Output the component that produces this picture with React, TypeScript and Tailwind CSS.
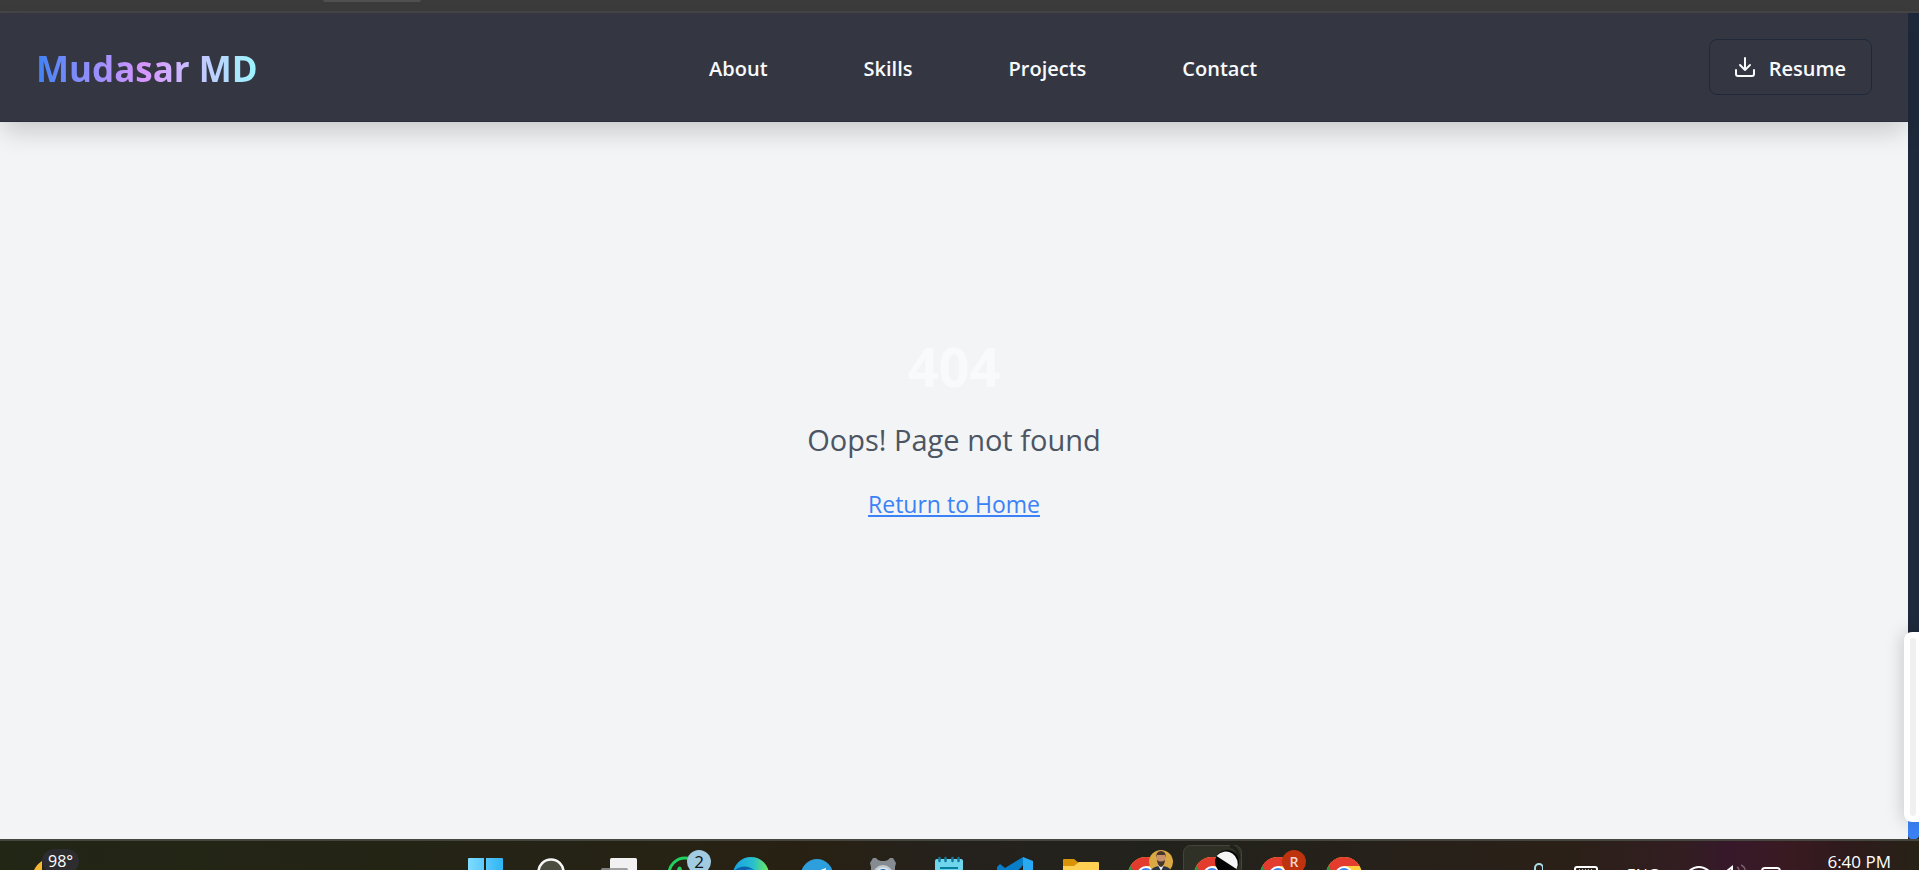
import type { ReactNode } from "react";

const links = ["About", "Skills", "Projects", "Contact"];

function DownloadIcon() {
  return (
    <svg width="20" height="20" viewBox="0 0 20 20" fill="none" stroke="currentColor" strokeWidth="2" strokeLinecap="round" strokeLinejoin="round" aria-hidden="true">
      <path d="M10 1v12M5 8l5 5 5-5M1 13v4a2 2 0 0 0 2 2h14a2 2 0 0 0 2-2v-4" />
    </svg>
  );
}

function Header() {
  return (
    <header className="relative flex shrink-0 items-center justify-between border-b border-[#2a2d3d] bg-[#343742] px-9 py-[26px] shadow-[0_12px_24px_-3px_rgba(0,0,0,0.18)]">
      <a href="#home" className="bg-gradient-to-r from-[#3b82f6] via-[#d896ff] to-[#99f6ff] bg-clip-text pt-1 text-[35px] leading-[44px] font-bold text-transparent">
        Mudasar MD
      </a>
      <nav className="flex gap-24">
        {links.map((name) => (
          <a key={name} href={"#" + name.toLowerCase()} className="pt-1 text-[20px] leading-[28px] font-semibold text-[#f8fafc]">
            {name}
          </a>
        ))}
      </nav>
      <button type="button" className="flex h-14 items-center gap-[14px] rounded-lg border border-[#1e293b] px-[25px] text-[20px] font-semibold text-[#f8fafc]">
        <DownloadIcon />
        <span className="pt-1 leading-[28px]">Resume</span>
      </button>
    </header>
  );
}

function Tile({ label, children }: { label: string; children: ReactNode }) {
  return (
    <button type="button" aria-label={label} className="h-full w-[66px] shrink-0">
      <svg width="66" height="29" viewBox="0 0 66 29" className="block" aria-hidden="true">
        {children}
      </svg>
    </button>
  );
}

function Chrome() {
  return (
    <g>
      <circle cx="33" cy="34" r="18" fill="#ffcd40" />
      <path d="M33 34 17.4 25A18 18 0 0 0 33 52z" fill="#249a48" />
      <path d="M17.4 25A18 18 0 0 1 48.6 25H33L25 38z" fill="#e33b2e" />
      <circle cx="33" cy="34" r="9" fill="#fff" />
      <circle cx="33" cy="34" r="7" fill="#3f83ef" />
    </g>
  );
}

function Apps() {
  return (
    <div className="flex h-full shrink-0">
      <Tile label="Start">
        <defs>
          <linearGradient id="win" x1="0" x2="1"><stop stopColor="#7fdcff" /><stop offset="1" stopColor="#2fb4f5" /></linearGradient>
        </defs>
        <path d="M16 17h15v15H15V18a1 1 0 0 1 1-1zM33 17h16a1 1 0 0 1 1 1v14H33z" fill="url(#win)" />
      </Tile>
      <Tile label="Search">
        <circle cx="32" cy="31" r="12.5" fill="#4b4d40" stroke="#f7f7f7" strokeWidth="2.6" />
      </Tile>
      <Tile label="Task view">
        <rect x="25" y="17" width="27" height="20" rx="1.5" fill="#f1f1f1" />
        <rect x="16" y="27" width="27" height="18" rx="1.5" fill="#929292" opacity="0.85" />
      </Tile>
      <Tile label="WhatsApp">
        <circle cx="34" cy="33" r="16" fill="none" stroke="#22cf60" strokeWidth="3" />
        <path d="M26 29q1-5 4-3l2 5z" fill="#22cf60" />
        <circle cx="48" cy="21" r="12" fill="#a0cbe0" />
        <text x="48" y="27" textAnchor="middle" fontSize="17" fill="#111">2</text>
      </Tile>
      <Tile label="Edge">
        <defs>
          <linearGradient id="edge" x1="0" x2="1"><stop stopColor="#1aa0e3" /><stop offset=".55" stopColor="#27bfd0" /><stop offset="1" stopColor="#70ec55" /></linearGradient>
        </defs>
        <circle cx="34" cy="34" r="18" fill="url(#edge)" />
        <path d="M16 34c1-10 18-12 23-2v6H16z" fill="#0d62ac" />
        <path d="M25 35c0-6 7-9 12-6v8z" fill="#1383d6" />
      </Tile>
      <Tile label="Telegram">
        <circle cx="34" cy="34" r="16" fill="#2e9fdd" />
        <path d="m35 30 8-3-1 6z" fill="#fff" />
      </Tile>
      <Tile label="Settings">
        <path d="M22 30v-4l-1-4 3-5h3q2 3 5 3h4q3 0 5-3h3l3 5-1 4v4z" fill="#858b91" />
        <circle cx="34" cy="34" r="10" fill="#c4cbd0" />
        <circle cx="34" cy="34" r="7.5" fill="#dfeaf2" />
        <circle cx="34" cy="34" r="6" fill="#1267ac" />
      </Tile>
      <Tile label="Notepad">
        <rect x="20" y="18" width="28" height="20" rx="2" fill="#70d6ed" />
        <path d="M24.500 17v3M30.500 17v3M37.500 17v3M43.500 17v3" stroke="#137a9c" strokeWidth="2.500" strokeLinecap="round" />
        <path d="M25 27h18" stroke="#087f9f" strokeWidth="2" />
      </Tile>
      <Tile label="Visual Studio Code">
        <path d="M16 26l3-3 5 4 18-11v8L30 38H16z" fill="#087dc8" />
        <path d="M42 16l10 4v16H42z" fill="#29a9f2" />
      </Tile>
      <Tile label="File Explorer">
        <path d="M16 19a1 1 0 0 1 1-1h10l5 4-4 3H16z" fill="#d99308" />
        <path d="M16 25h11l5-4h19a1 1 0 0 1 1 1v14H16z" fill="#ffd052" />
      </Tile>
      <Tile label="Chrome, first profile">
        <Chrome />
        <circle cx="48" cy="21" r="12" fill="#dba944" />
        <path d="M38 29q3-4 10-4t10 4v4H38z" fill="#2b3440" />
        <path d="m45 24 3 6 3-6z" fill="#eee" />
        <ellipse cx="48" cy="18" rx="4.500" ry="6.500" fill="#c8916e" />
        <path d="M43 17q0-7 5-7t5 7l-1-3h-8zM44 19q4 3 8 0-1 7-4 7t-4-7z" fill="#49352b" />
      </Tile>
      <Tile label="Chrome, second profile">
        <rect x="4.500" y="4.500" width="58" height="40" rx="7" fill="#303126" stroke="#43443a" />
        <Chrome />
        <path d="M51 5q8 1 9 13" stroke="#20201b" strokeWidth="3" fill="none" />
        <circle cx="48" cy="21" r="12" fill="#050505" />
        <path d="M37.500 15a12 12 0 0 1 20 13z" fill="#f5f5f5" />
      </Tile>
      <Tile label="Chrome, third profile">
        <Chrome />
        <circle cx="49" cy="21" r="12" fill="#bd330d" />
        <text x="49" y="26" textAnchor="middle" fontSize="14" fontWeight="600" fill="#f3d4ca">R</text>
      </Tile>
      <Tile label="Chrome"><Chrome /></Tile>
    </div>
  );
}

function Taskbar() {
  return (
    <footer className="relative flex h-[31px] shrink-0 overflow-hidden border-t-2 border-[#454640] bg-[linear-gradient(90deg,#222615_0%,#252315_30%,#282113_42%,#25211d_50%,#22221c_60%,#25211a_70%,#2b2018_82%,#331d22_88%,#36182a_90%,#3a1a22_93%,#2f1a1c_96%,#272216_100%)] text-white">
      <div className="flex w-[453px] pl-[34px]">
        <svg width="8" height="29" viewBox="0 0 8 29" aria-hidden="true">
          <path d="M8 20Q3 23 0 29h8z" fill="#f7b731" />
        </svg>
        <span className="mt-2 h-6 rounded-full bg-[#2d2d30] px-[6px] text-[16px] leading-[24px]">98°</span>
      </div>
      <Apps />
      <div className="ml-auto flex gap-7 pr-7">
        <svg width="12" height="29" viewBox="0 0 12 29" fill="none" aria-hidden="true">
          <rect x="4" y="23" width="8" height="14" rx="4" stroke="#a9dce8" strokeWidth="2" />
        </svg>
        <svg width="28" height="29" viewBox="0 0 28 29" fill="none" aria-hidden="true">
          <rect x="4" y="26" width="22" height="14" rx="2" stroke="#fff" strokeWidth="2" />
          <path d="M8 28.500h14" stroke="#bbb" strokeDasharray="1 2" />
        </svg>
        <span className="mt-[22px] text-[16px] leading-[24px]">ENG</span>
        <div className="flex gap-[14px]">
          <svg width="24" height="29" viewBox="0 0 24 29" fill="none" aria-hidden="true">
            <path d="M2 30q10-8 20 0" stroke="#fff" strokeWidth="2" />
          </svg>
          <svg width="22" height="29" viewBox="0 0 22 29" fill="none" aria-hidden="true">
            <path d="m2 30 5-4v4" stroke="#fff" strokeWidth="2" />
            <path d="M12 26q2 1 2 3M16 24q4 2 4 5" stroke="#796069" strokeWidth="1.500" />
          </svg>
          <svg width="22" height="29" viewBox="0 0 22 29" fill="none" aria-hidden="true">
            <rect x="1" y="27" width="18" height="12" rx="3" stroke="#fff" strokeWidth="2" />
          </svg>
        </div>
        <time className="mt-[9px] ml-4 text-[17px] leading-[24px] whitespace-nowrap">6:40 PM</time>
      </div>
    </footer>
  );
}

export default function App() {
  return (
    <div className="flex h-screen flex-col overflow-hidden font-['Open_Sans',sans-serif]">
      <div className="flex h-[13px] shrink-0 border-b-2 border-[#454545] bg-[#3b3b3b] pl-[323px]">
        <div className="h-[2px] w-[98px] rounded-b-full bg-[#505050]" />
      </div>
      <div className="relative flex min-h-0 flex-1 bg-[#272216]">
        <div className="flex min-w-0 flex-1 flex-col bg-[#f3f4f6]">
          <Header />
          <main className="flex flex-1 flex-col items-center pt-[208px] text-center">
            <h1 className="text-[54px] leading-[72px] font-bold text-[#f9fafb]">404</h1>
            <p className="mt-[18px] text-[29px] leading-[40px] text-[#4b5563]">Oops! Page not found</p>
            <a href="#home" className="mt-6 text-[23px] leading-[40px] text-[#3b82f6] underline">Return to Home</a>
          </main>
        </div>
        <div className="w-[11px] shrink-0 rounded-b-[4px] bg-[linear-gradient(#1e293b_82%,#3b82f6_82%)]" />
        <aside className="absolute right-0 bottom-[17px] flex h-[190px] w-[15px] rounded-l-lg bg-white py-[6px] pl-[6px] shadow-[0_0_18px_rgba(0,0,0,0.22)]">
          <div className="w-[6px] rounded-full bg-[#f0f0f0]" />
        </aside>
      </div>
      <Taskbar />
    </div>
  );
}
